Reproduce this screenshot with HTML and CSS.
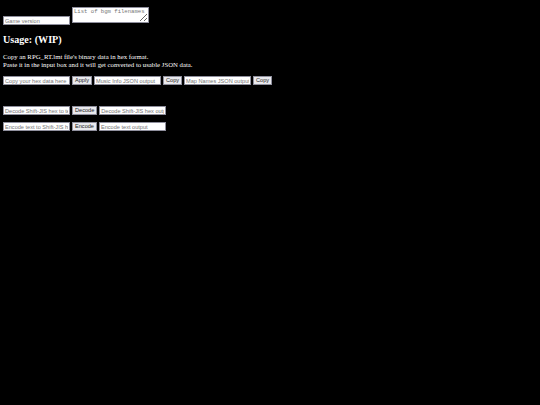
FILE: index.html
```html
<!DOCTYPE html>
<html lang="en">

<head>
    <meta charset="UTF-8">
    <meta name="viewport" content="width=device-width, initial-scale=1.0">
    <title>RPG_RT.lmt Reader</title>
    <link rel="stylesheet" href="styles.css">
</head>

<body>
    <div class="settings">
        <input type="text" id="game-version" placeholder="Game version">
        <textarea id="bgm-list" placeholder="List of bgm filenames"></textarea>
    </div>

    <h2>Usage: (WIP)</h2>
    <p>
        Copy an RPG_RT.lmt file's binary data in hex format.<br>
        Paste it in the input box and it will get converted to usable JSON data.
    </p>

    <div class="row">
        <input type="text" id="hex-input" placeholder="Copy your hex data here">
        <button id="apply-btn">Apply</button>
        <input type="text" id="music-output" placeholder="Music Info JSON output">
        <button class="copy-btn" data-target="music-output">Copy</button>
        <input type="text" id="map-output" placeholder="Map Names JSON output">
        <button class="copy-btn" data-target="map-output">Copy</button>
    </div>

    <div class="row tools">
        <input type="text" id="decode-input" placeholder="Decode Shift-JIS hex to text">
        <button id="decode-btn">Decode</button>
        <input type="text" id="decode-output" placeholder="Decode Shift-JIS hex output">
    </div>

    <div class="row">
        <input type="text" id="encode-input" placeholder="Encode text to Shift-JIS hex">
        <button id="encode-btn">Encode</button>
        <input type="text" id="encode-output" placeholder="Encode text output">
    </div>
</body>

</html>
```

FILE: styles.css
```css
body {
    background-color: #000;
    color: #fff;
    font-family: 'Liberation Serif', serif;
    -webkit-font-smoothing: antialiased;
    margin: 0;
    padding: 0 3px;
}

.settings {
    display: flex;
    align-items: flex-start;
    gap: 2px;
    padding-top: 7px;
}

.settings input {
    margin-top: 9px;
}

input {
    box-sizing: border-box;
    width: 67px;
    height: 9px;
    margin: 0;
    padding: 0 1px;
    border: 1px solid #8f8f9d;
    background: #fff;
    font-family: 'Liberation Sans', sans-serif;
    font-size: 5.6px;
}

input::placeholder {
    color: #757575;
}

textarea {
    box-sizing: border-box;
    width: 77px;
    height: 16px;
    margin: 0;
    padding: 1px;
    border: 1px solid #8f8f9d;
    background: #fff;
    font-family: 'Liberation Mono', monospace;
    font-size: 5.6px;
    line-height: 6.5px;
}

textarea::placeholder {
    color: #757575;
}

button {
    box-sizing: border-box;
    height: 9px;
    margin: 0;
    padding: 0 2px;
    border: 1px solid #8f8f9d;
    background: #e9e9ed;
    color: #222;
    font-family: 'Liberation Sans', sans-serif;
    font-size: 5.6px;
    line-height: 7px;
}

h2 {
    font-size: 10.1px;
    margin: 9px 0 0;
    line-height: 12px;
}

p {
    font-size: 6.75px;
    line-height: 7.5px;
    margin: 7px 0 0;
}

.row {
    display: flex;
    gap: 2px;
    margin-top: 8px;
}

.row.tools {
    margin-top: 21px;
}

.row.tools + .row {
    margin-top: 7px;
}
```
